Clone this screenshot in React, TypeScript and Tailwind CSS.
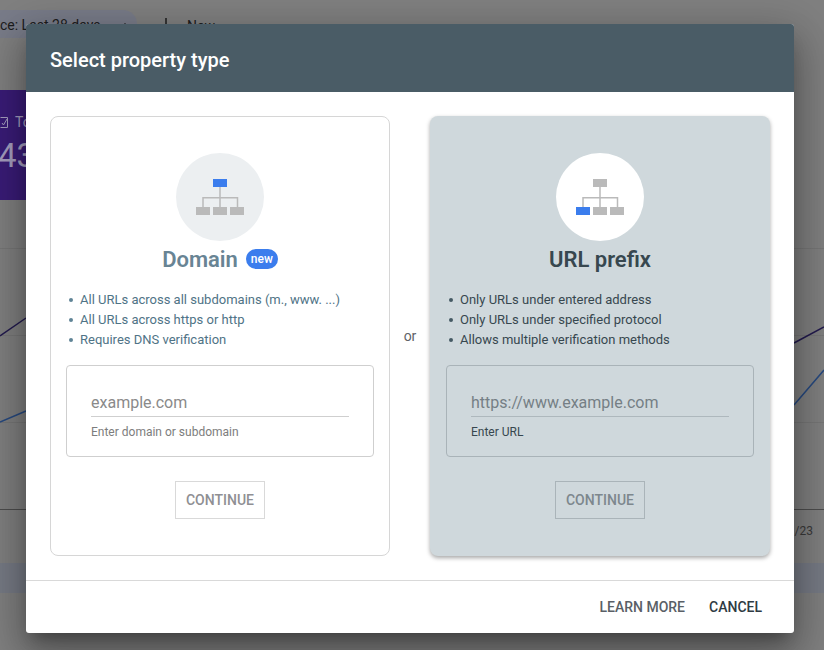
import type { ReactNode } from "react";

// Small sitemap drawing, blue box moves between the top node and first child.
function SiteTree({ active }: { active: "top" | "child" }) {
  const grey = "#bababa";
  const blue = "#3b7ded";
  return (
    <svg width="48" height="36" viewBox="0 0 48 36">
      <g fill="none" stroke={grey} strokeWidth="1.5">
        <path d="M24 7.5V28" />
        <path d="M7 28V18.75H41.5V28" />
      </g>
      <rect x="17" y="0" width="14" height="8" fill={active === "top" ? blue : grey} />
      <rect x="0" y="28" width="14" height="8" fill={active === "child" ? blue : grey} />
      <rect x="17" y="28" width="14" height="8" fill={grey} />
      <rect x="34" y="28" width="14" height="8" fill={grey} />
    </svg>
  );
}

function PropertyCard({
  selected,
  title,
  badge,
  items,
  placeholder,
  helper,
}: {
  selected?: boolean;
  title: string;
  badge?: ReactNode;
  items: string[];
  placeholder: string;
  helper: string;
}) {
  return (
    <div
      className={`flex h-[440px] w-[340px] flex-col items-center rounded-lg border px-[15px] pt-9 ${
        selected
          ? "border-transparent bg-[#cfd8dc] shadow-[0_2px_4px_rgba(0,0,0,0.35)]"
          : "border-[#d6d6d6] bg-white"
      }`}
    >
      <div
        className={`flex h-[88px] w-[88px] items-center justify-center rounded-full ${
          selected ? "bg-white" : "bg-[#eceff1]"
        }`}
      >
        <SiteTree active={selected ? "child" : "top"} />
      </div>
      <div className="flex h-9 items-center gap-2">
        <h2
          className={`text-[22px] font-semibold ${
            selected ? "text-[#37474f]" : "text-[#688494]"
          }`}
        >
          {title}
        </h2>
        {badge}
      </div>
      <ul
        className={`mt-[13px] flex w-full flex-col text-[13px] leading-5 ${
          selected ? "text-[#37474f]" : "text-[#4f7386]"
        }`}
      >
        {items.map((item) => (
          <li key={item} className="flex items-center gap-[7px] pl-[3px]">
            <span
              className={`h-1 w-1 rounded-full ${
                selected ? "bg-[#455a64]" : "bg-[#5f8496]"
              }`}
            />
            {item}
          </li>
        ))}
      </ul>
      <div
        className={`mt-[15px] h-[92px] w-full rounded border px-6 pt-6 ${
          selected ? "border-[#a9b3b8]" : "border-[#cfcfcf]"
        }`}
      >
        <div
          className={`h-[27px] border-b pt-[1px] text-base leading-[24px] ${
            selected
              ? "border-[#aeb8bd] text-[#757f85]"
              : "border-[#cfcfcf] text-[#8a8a8a]"
          }`}
        >
          {placeholder}
        </div>
        <p
          className={`mt-[8px] text-xs leading-[14px] ${
            selected ? "text-[#37474f]" : "text-[#7d7d7d]"
          }`}
        >
          {helper}
        </p>
      </div>
      <button
        type="button"
        className={`mt-6 h-[38px] w-[90px] border text-sm font-medium ${
          selected
            ? "border-[#aab4b9] text-[#7d878d]"
            : "border-[#d9d9d9] text-[#8f8f93]"
        }`}
      >
        CONTINUE
      </button>
    </div>
  );
}

function BackgroundPage() {
  return (
    <div className="flex h-[650px] flex-col overflow-hidden bg-[#808080] text-[#1d1d1d]">
      <div className="flex h-[90px] items-start pt-[10px]">
        <div className="flex h-7 w-[137px] items-center justify-between rounded-r-2xl bg-[#797c89] pr-[8px] pt-[2px] text-sm">
          <span>ce: Last 28 days</span>
          <svg width="10" height="10" viewBox="0 0 10 10" className="mt-[2px]">
            <path d="M1 9L2 6L6 2L8 4L4 8Z" fill="#1d1d1d" />
          </svg>
        </div>
        <svg width="10" height="12" viewBox="0 0 10 12" className="ml-[24px] mt-[8px]">
          <path d="M5 0V12" stroke="#1d1d1d" strokeWidth="1.5" />
        </svg>
        <span className="ml-[16px] mt-[6px] text-sm">New</span>
      </div>
      <div className="flex h-[110px] w-[60px] flex-col bg-[#3a1c78] pt-[22px] text-[#a69fc0]">
        <div className="flex items-center gap-[7px] text-sm">
          <svg width="8" height="11" viewBox="0 0 8 11">
            <path d="M0.5 0.5H7.5M0.5 10.5H7.5M7.5 0.5V10.5M2 6L3.5 8L7 2" fill="none" stroke="#a69fc0" />
          </svg>
          To
        </div>
        <div className="ml-[-2px] mt-[4px] text-[33px] leading-10">43</div>
      </div>
      <svg className="h-[310px] w-full shrink-0" viewBox="0 0 824 310">
        <g stroke="#777" strokeWidth="1">
          <path d="M0 48.5H824M0 135.5H824M0 222.5H824" />
        </g>
        <path d="M0 309.5H824" stroke="#4d4d4d" strokeWidth="1" />
        <path d="M0 136L26 118M794 143L824 127" fill="none" stroke="#221a4e" strokeWidth="1.5" />
        <path d="M0 222L26 211M794 205L824 170" fill="none" stroke="#27497f" strokeWidth="1.5" />
      </svg>
      <div className="mt-[13px] pr-[11px] text-right text-xs text-[#3a3a3a]">/23</div>
      <div className="mt-[24px] h-[30px] w-full bg-[#777b85]" />
    </div>
  );
}

export default function App() {
  return (
    <div className="relative h-[650px] w-[824px] overflow-hidden font-['Roboto',sans-serif]">
      <BackgroundPage />
      <div
        role="dialog"
        className="absolute left-[26px] top-[24px] flex h-[609px] w-[768px] flex-col overflow-hidden rounded-[3px] bg-white shadow-[0_11px_15px_-7px_rgba(0,0,0,0.3),0_24px_38px_3px_rgba(0,0,0,0.2),0_9px_46px_8px_rgba(0,0,0,0.18)]"
      >
        <header className="flex h-[68px] shrink-0 items-center bg-[#4a5c66] px-6 pt-[3px] text-xl font-medium text-white">
          Select property type
        </header>
        <div className="flex flex-1 items-start px-6 pt-6">
          <PropertyCard
            title="Domain"
            badge={
              <span className="flex h-5 items-center rounded-full bg-[#3b7ded] px-[5px] text-xs font-medium text-white">
                new
              </span>
            }
            items={[
              "All URLs across all subdomains (m., www. ...)",
              "All URLs across https or http",
              "Requires DNS verification",
            ]}
            placeholder="example.com"
            helper="Enter domain or subdomain"
          />
          <div className="flex h-[440px] w-10 items-center justify-center text-sm text-[#5f6368]">
            or
          </div>
          <PropertyCard
            selected
            title="URL prefix"
            items={[
              "Only URLs under entered address",
              "Only URLs under specified protocol",
              "Allows multiple verification methods",
            ]}
            placeholder="https://www.example.com"
            helper="Enter URL"
          />
        </div>
        <footer className="flex h-[53px] shrink-0 items-center justify-end gap-6 border-t border-[#d9d9d9] pr-8 text-sm font-medium">
          <button type="button" className="text-[#5a5f66]">
            LEARN MORE
          </button>
          <button type="button" className="text-[#2f3b43]">
            CANCEL
          </button>
        </footer>
      </div>
    </div>
  );
}
